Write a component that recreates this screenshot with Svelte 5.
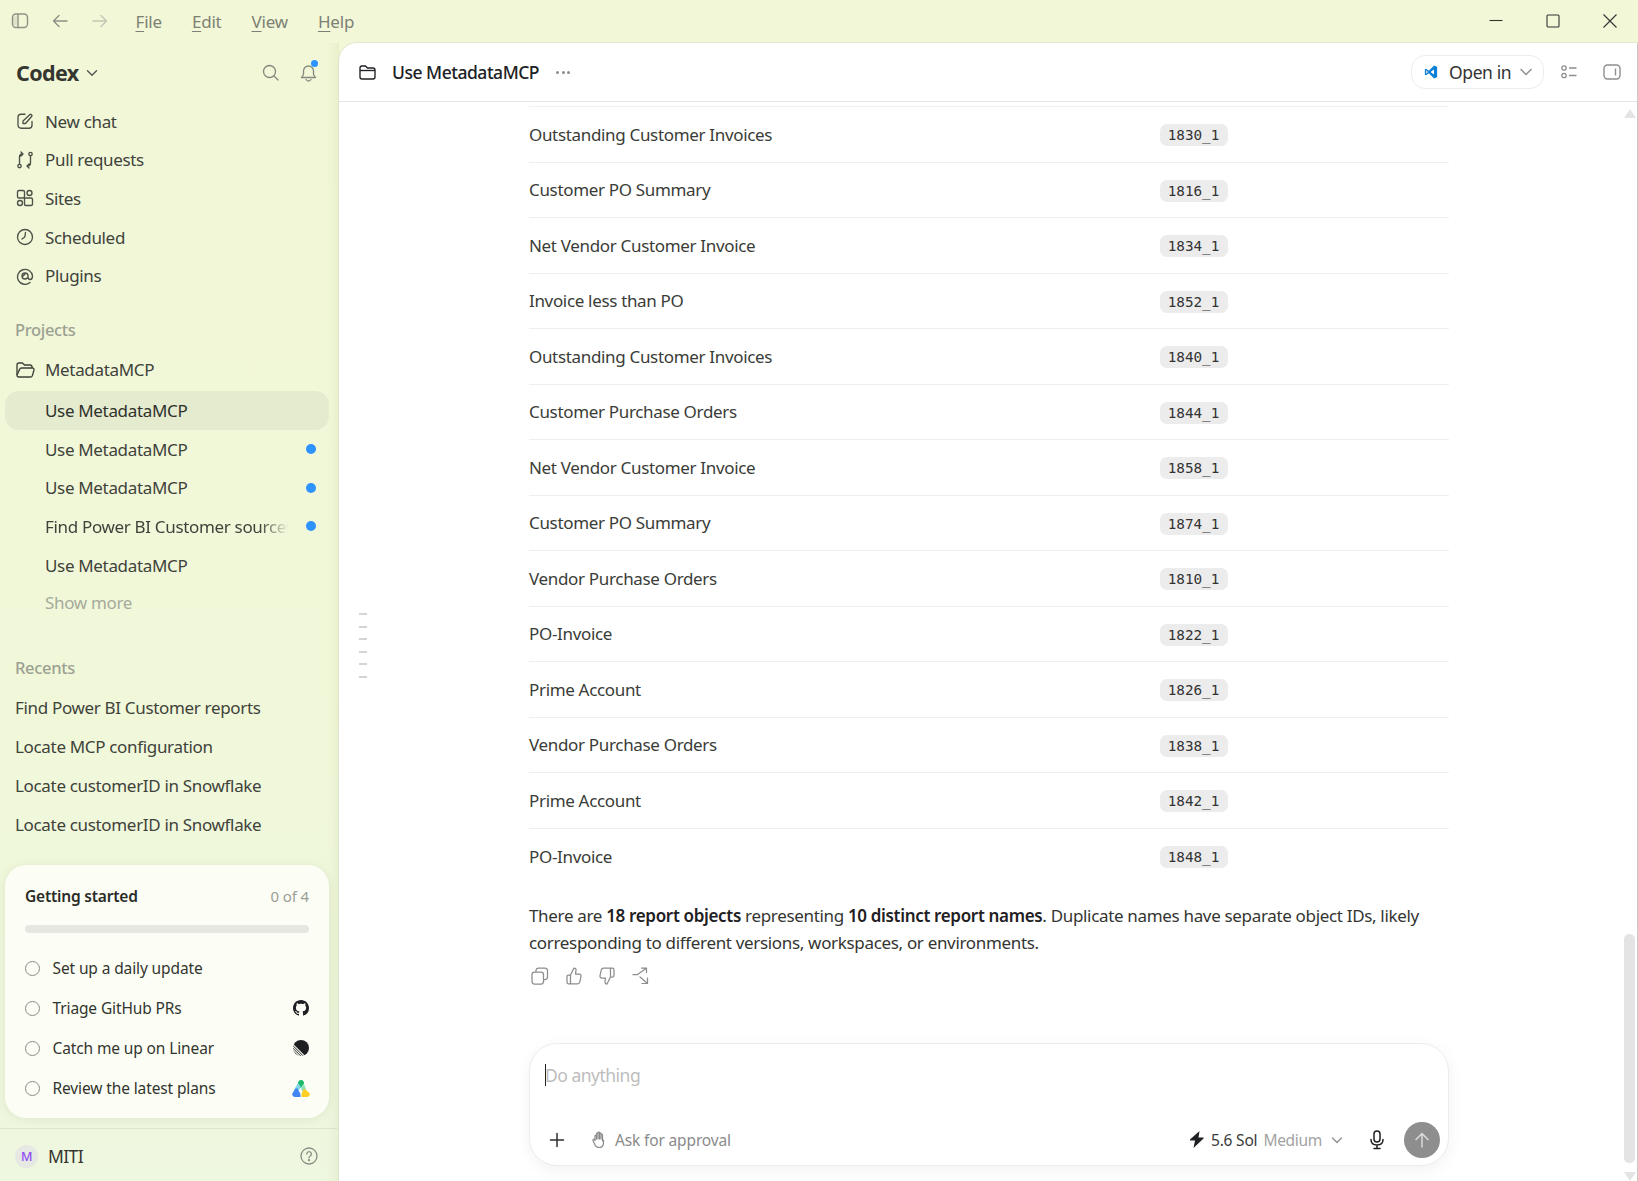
<script>
  const nav = [
    { label: 'New chat', icon: 'edit' },
    { label: 'Pull requests', icon: 'pr' },
    { label: 'Sites', icon: 'sites' },
    { label: 'Scheduled', icon: 'clock' },
    { label: 'Plugins', icon: 'at' }
  ];
  const threads = [
    { t: 'Use MetadataMCP', active: true },
    { t: 'Use MetadataMCP', dot: true },
    { t: 'Use MetadataMCP', dot: true },
    { t: 'Find Power BI Customer sources', dot: true, fade: true },
    { t: 'Use MetadataMCP' }
  ];
  const recents = ['Find Power BI Customer reports', 'Locate MCP configuration', 'Locate customerID in Snowflake', 'Locate customerID in Snowflake'];
  const rows = [
    ['Outstanding Customer Invoices', '1830_1'],
    ['Customer PO Summary', '1816_1'],
    ['Net Vendor Customer Invoice', '1834_1'],
    ['Invoice less than PO', '1852_1'],
    ['Outstanding Customer Invoices', '1840_1'],
    ['Customer Purchase Orders', '1844_1'],
    ['Net Vendor Customer Invoice', '1858_1'],
    ['Customer PO Summary', '1874_1'],
    ['Vendor Purchase Orders', '1810_1'],
    ['PO-Invoice', '1822_1'],
    ['Prime Account', '1826_1'],
    ['Vendor Purchase Orders', '1838_1'],
    ['Prime Account', '1842_1'],
    ['PO-Invoice', '1848_1']
  ];
  const tasks = [
    { t: 'Set up a daily update' },
    { t: 'Triage GitHub PRs', i: 'gh' },
    { t: 'Catch me up on Linear', i: 'linear' },
    { t: 'Review the latest plans', i: 'drive' }
  ];
  const menus = [['F', 'ile'], ['E', 'dit'], ['V', 'iew'], ['H', 'elp']];
</script>

<div class="app">
  <header class="titlebar">
    <div class="tb-left">
      <svg class="tb-ic" width="18" height="18" viewBox="0 0 18 18" fill="none" stroke="#8d9284" stroke-width="1.4"><rect x="1.5" y="2" width="15" height="13.5" rx="3.5"/><path d="M7 2v13.5"/><path d="M2 4.500h4.500v8.500H2z" fill="#8d9284" fill-opacity=".18" stroke="none"/></svg>
      <svg class="tb-back" width="18" height="18" viewBox="0 0 18 18" fill="none" stroke="#8d9284" stroke-width="1.4" stroke-linecap="round" stroke-linejoin="round"><path d="M16 9H2.500M8 3.500 2.500 9 8 14.500"/></svg>
      <svg class="tb-fwd" width="18" height="18" viewBox="0 0 18 18" fill="none" stroke="#c3c8b6" stroke-width="1.4" stroke-linecap="round" stroke-linejoin="round"><path d="M2 9h13.500M10 3.500 15.500 9 10 14.500"/></svg>
      <nav class="menu">
        {#each menus as m}
          <span class="menu-item"><u>{m[0]}</u>{m[1]}</span>
        {/each}
      </nav>
    </div>
    <div class="win">
      <svg width="14" height="14" viewBox="0 0 14 14" stroke="#333" stroke-width="1.1"><path d="M0.500 6.500h13"/></svg>
      <svg width="14" height="14" viewBox="0 0 14 14" fill="none" stroke="#333" stroke-width="1.1"><rect x="1" y="1" width="12" height="12" rx="1"/></svg>
      <svg width="14" height="14" viewBox="0 0 14 14" stroke="#333" stroke-width="1.1"><path d="m.5.500 13 13M13.500.500l-13 13"/></svg>
    </div>
  </header>

  <div class="body">
    <aside class="sidebar">
      <div class="brand">
        <span class="brand-name">Codex</span>
        <svg class="chev" width="12" height="12" viewBox="0 0 12 12" fill="none" stroke="#555" stroke-width="1.4" stroke-linecap="round" stroke-linejoin="round"><path d="M1.500 3.800 6 8.300l4.500-4.500"/></svg>
        <svg class="search" width="17" height="17" viewBox="0 0 17 17" fill="none" stroke="#86897e" stroke-width="1.3" stroke-linecap="round"><circle cx="7.500" cy="7.500" r="6"/><path d="m12 12 4 4"/></svg>
        <span class="bell">
          <svg width="17" height="18" viewBox="0 0 17 18" fill="none" stroke="#86897e" stroke-width="1.3" stroke-linecap="round" stroke-linejoin="round"><path d="M8.500 2a5 5 0 0 0-5 5v3.500L1.500 13.500h14l-2-3V7a5 5 0 0 0-5-5z"/><path d="M6 15.500c.6 1 1.500 1.500 2.500 1.500s1.900-.5 2.500-1.500"/></svg>
          <i class="bell-dot"></i>
        </span>
      </div>

      <ul class="nav">
        {#each nav as n}
          <li class="nav-item">
            <svg class="nav-ic" width="18" height="18" viewBox="0 0 18 18" fill="none" stroke="#4d5147" stroke-width="1.35" stroke-linecap="round" stroke-linejoin="round">
              {#if n.icon === 'edit'}
                <path d="M9 2.200H5a3 3 0 0 0-3 3v8a3 3 0 0 0 3 3h8a3 3 0 0 0 3-3V9.500"/><path d="M7 11.500V9l7-6.500c.8-.7 2.600.9 1.800 1.800L9.500 11.500z"/>
              {:else if n.icon === 'pr'}
                <circle cx="3.500" cy="15" r="1.700"/><circle cx="14.500" cy="3" r="1.700"/><path d="M3.500 13V6c0-2 1-3 3-3M5 5 7 3 5 1"/><path d="M14.500 5v7c0 2-1 3-3 3M13 13l-2 2 2 2"/>
              {:else if n.icon === 'sites'}
                <rect x="1.500" y="1.500" width="7" height="7.500" rx="1.500"/><circle cx="13.500" cy="4" r="2.500"/><circle cx="4" cy="14" r="2.500"/><path d="M8.500 9h6.500a1.500 1.500 0 0 1 1.500 1.500V15a1.500 1.500 0 0 1-1.500 1.500H10A1.500 1.500 0 0 1 8.500 15z"/>
              {:else if n.icon === 'clock'}
                <circle cx="9" cy="9" r="7.500"/><path d="M9.500 4.500 8.800 9 6 11"/>
              {:else}
                <path d="M16.500 9c0 2-1 3.500-2.500 3.500S12 11.500 12 9.500V9a3 3 0 1 0-3 3c1 0 1.700-.4 2.200-1M14 15.500A7.500 7.500 0 1 1 16.500 9"/><path d="M6.500 9.500 9 7"/>
              {/if}
            </svg>
            <span>{n.label}</span>
          </li>
        {/each}
      </ul>

      <div class="sec-label projects">Projects</div>
      <div class="project">
        <svg class="nav-ic" width="19" height="16" viewBox="0 0 19 16" fill="none" stroke="#3d4038" stroke-width="1.35" stroke-linejoin="round"><path d="M1 13V3a2 2 0 0 1 2-2h3.500l2 2H14a2 2 0 0 1 2 2v1"/><path d="M3 15h11.500c1 0 1.600-.5 1.900-1.400L18 8c.2-1-.4-2-1.500-2h-11c-1 0-1.600.5-1.900 1.400L1 13c0 1.200 1 2 2 2z"/></svg>
        <span>MetadataMCP</span>
      </div>
      <ul class="threads">
        {#each threads as t}
          <li class="thread" class:active={t.active}>
            <span class="thread-t" class:fade={t.fade}>{t.t}</span>
            {#if t.dot}<i class="dot"></i>{/if}
          </li>
        {/each}
      </ul>
      <div class="show-more">Show more</div>

      <div class="sec-label recents">Recents</div>
      <ul class="recent-list">
        {#each recents as r}<li>{r}</li>{/each}
      </ul>

      <section class="card">
        <div class="card-head"><strong>Getting started</strong><span>0 of 4</span></div>
        <div class="progress"></div>
        <ul class="tasks">
          {#each tasks as t}
            <li class="task">
              <i class="radio"></i>
              <span class="task-t">{t.t}</span>
              {#if t.i === 'gh'}
                <svg width="16" height="16" viewBox="0 0 16 16" fill="#1d1f22"><path d="M8 0C3.580 0 0 3.580 0 8c0 3.540 2.290 6.530 5.470 7.590.4.070.55-.17.55-.38 0-.19-.01-.82-.01-1.490-2.010.37-2.530-.49-2.690-.94-.09-.23-.48-.94-.82-1.130-.28-.15-.68-.52-.01-.53.63-.01 1.080.58 1.230.82.72 1.210 1.870.87 2.330.66.070-.52.28-.87.51-1.070-1.780-.2-3.640-.89-3.640-3.950 0-.87.31-1.590.82-2.150-.08-.2-.36-1.020.08-2.120 0 0 .67-.21 2.200.82.64-.18 1.320-.27 2-.27.68 0 1.360.09 2 .27 1.530-1.040 2.200-.82 2.200-.82.44 1.100.16 1.920.08 2.120.51.56.82 1.270.82 2.150 0 3.070-1.870 3.750-3.650 3.950.29.25.54.73.54 1.480 0 1.070-.01 1.930-.01 2.200 0 .21.15.46.55.38A8.013 8.013 0 0 0 16 8c0-4.420-3.580-8-8-8z"/></svg>
              {:else if t.i === 'linear'}
                <svg width="16" height="16" viewBox="0 0 16 16"><circle cx="8" cy="8" r="8" fill="#1d1f22"/><path d="M-2 2.500 13.500 18M-2 5 11 18M-2 7.500 8.500 18M-2 10 6 18" stroke="#fdfff5" stroke-width="1.100"/></svg>
              {:else if t.i === 'drive'}
                <svg class="drive" width="18" height="17" viewBox="0 0 18 17"><path d="M6 3.500Q6 0 9 0t3 3.500L9 8H6z" fill="#1bb96a"/><path d="M6 3 2 10h5l2-3z" fill="#7fd4e8"/><path d="M5 8.500H3.500L.6 13c-1 2 .4 4 2.400 4h5.500v-3l-3-5.500z" fill="#4285f4"/><path d="M12 4 9 9l3 4.500h3.500z" fill="#8be0b8"/><path d="m12 8.500 5.400 4.500c1 2-.4 4-2.400 4H9.500v-3z" fill="#ffcf24"/></svg>
              {/if}
            </li>
          {/each}
        </ul>
      </section>

      <footer class="profile">
        <span class="avatar">M</span>
        <span class="who">MITI</span>
        <svg class="help" width="18" height="18" viewBox="0 0 18 18" fill="none" stroke="#8a8d82" stroke-width="1.3" stroke-linecap="round"><circle cx="9" cy="9" r="8"/><path d="M6.800 7a2.300 2.300 0 1 1 3.500 2c-.8.500-1.300 1-1.300 1.800"/><circle cx="9" cy="13.200" r=".5" fill="#8a8d82"/></svg>
      </footer>
    </aside>

    <main class="panel">
      <div class="head">
        <svg width="17" height="15" viewBox="0 0 17 15" fill="none" stroke="#1f2023" stroke-width="1.35"><path d="M1 4.500V3a2 2 0 0 1 2-2h3.500l2 2H14a2 2 0 0 1 2 2v7a2 2 0 0 1-2 2H3a2 2 0 0 1-2-2z"/><path d="M1 5.500h15"/></svg>
        <h1>Use MetadataMCP</h1>
        <span class="more"><i></i><i></i><i></i></span>
        <div class="open-in">
          <svg class="vs" width="14" height="14" viewBox="0 0 24 24"><path fill="#0a7fd6" d="M17.500 1 8.200 10 3.500 6.400 1.500 7.400v9.200l2 1 4.700-3.600 9.300 9 5-2.400V3.400zM3.800 14.800V9.200L6.600 12zm13.400 1.500L11.200 12l6-4.300z"/></svg>
          <span>Open in</span>
          <svg width="14" height="14" viewBox="0 0 14 14" fill="none" stroke="#8f8f8f" stroke-width="1.500" stroke-linecap="round" stroke-linejoin="round"><path d="m2 4.500 5 5 5-5"/></svg>
        </div>
        <svg class="h-list" width="16" height="14" viewBox="0 0 16 14" fill="none" stroke="#8f8f8f" stroke-width="1.300"><circle cx="3" cy="3" r="2.200"/><circle cx="3" cy="10.500" r="2.200"/><path d="M8 3h7.500M8 10.500h7.500"/></svg>
        <svg class="h-panel" width="18" height="16" viewBox="0 0 18 16" fill="none" stroke="#8f8f8f" stroke-width="1.400"><rect x="1" y="1" width="16" height="14" rx="3.500"/><path d="M12.500 4.500v7"/></svg>
      </div>

      <div class="thread-area">
        <div class="content">
          <div class="tbl">
            {#each rows as r}
              <div class="row"><span class="name">{r[0]}</span><code>{r[1]}</code></div>
            {/each}
          </div>
          <p class="summary">There are <b>18 report objects</b> representing <b>10 distinct report names</b>. Duplicate names have separate object IDs, likely corresponding to different versions, workspaces, or environments.</p>
          <div class="actions">
            <svg width="18" height="18" viewBox="0 0 18 18" fill="none" stroke="#8d8d8d" stroke-width="1.250" stroke-linejoin="round"><rect x="1" y="5" width="11.500" height="12" rx="2.500"/><path d="M5 5V3.500A2.500 2.500 0 0 1 7.500 1H14a2.500 2.500 0 0 1 2.500 2.500V10a2.500 2.500 0 0 1-2.500 2.500h-1.500"/></svg>
            <svg width="16" height="18" viewBox="0 0 16 18" fill="none" stroke="#8d8d8d" stroke-width="1.250" stroke-linejoin="round"><path d="M4.500 8 8 1c1.500 0 2.200 1 2 2.500L9.500 7H13c1.500 0 2.300 1 2 2.300l-1.200 5.500c-.3 1.300-1 2-2.300 2h-7zM4.500 8H2.500A1.500 1.500 0 0 0 1 9.500v5.800a1.500 1.500 0 0 0 1.500 1.500h2"/></svg>
            <svg width="16" height="18" viewBox="0 0 16 18" fill="none" stroke="#8d8d8d" stroke-width="1.250" stroke-linejoin="round"><path d="M11.500 10 8 17c-1.500 0-2.200-1-2-2.500l.5-3.500H3c-1.500 0-2.300-1-2-2.300L2.200 3.200C2.500 1.900 3.200 1.200 4.500 1.200h7zM11.500 1.200h2A1.500 1.500 0 0 1 15 2.700v5.800A1.500 1.500 0 0 1 13.500 10h-2"/></svg>
            <svg width="17" height="17" viewBox="0 0 17 17" fill="none" stroke="#8d8d8d" stroke-width="1.250" stroke-linecap="round" stroke-linejoin="round"><path d="M1 7.500h4.500L14 1.500M9.500 1h5v4.500M8 10l7 6M15.500 11v5.500H10"/></svg>
          </div>
        </div>
      </div>

      <div class="dashes"><i></i><i></i><i></i><i></i><i></i><i></i></div>
      <div class="scroll">
        <svg class="arr up" width="12" height="9" viewBox="0 0 12 9"><path d="M6 0l6 9H0z" fill="#e4e4e4"/></svg>
        <div class="thumb"></div>
        <svg class="arr down" width="12" height="9" viewBox="0 0 12 9"><path d="M6 9 0 0h12z" fill="#e4e4e4"/></svg>
      </div>

      <div class="composer-wrap">
        <div class="composer">
          <div class="input"><i class="caret"></i><span>Do anything</span></div>
          <div class="tools">
            <svg class="plus" width="16" height="16" viewBox="0 0 16 16" stroke="#2f2f2f" stroke-width="1.500" stroke-linecap="round"><path d="M8 1.500v13M1.500 8h13"/></svg>
            <svg class="hand" width="16" height="17" viewBox="0 0 16 17" fill="none" stroke="#8a8a8a" stroke-width="1.200" stroke-linecap="round" stroke-linejoin="round"><path d="M3 9.500V5c0-1 1.500-1 1.500 0v3M4.500 8V2.800c0-1 1.500-1 1.500 0V8M6 8V1.800c0-1 1.500-1 1.500 0V8M7.500 8V2.500c0-1 1.500-1 1.500 0V8M9 8V4c0-1 1.500-1 1.500 0v6"/><path d="M3 9c-1-1.500-2.500-.8-2 .5l2 4.500c.8 1.800 2 2.500 4 2.500 3 0 4.500-2 4.500-5V9"/></svg>
            <span class="approval">Ask for approval</span>
            <svg class="bolt" width="16" height="17" viewBox="0 0 16 17" fill="#1f2023"><path d="M10.500 0 1 8.500c-.4.400 0 1 .5 1H6L4.500 17l10-9.500c.4-.4.100-1-.5-1h-4.500z"/></svg>
            <span class="model">5.6 Sol</span>
            <span class="effort">Medium</span>
            <svg class="m-chev" width="12" height="12" viewBox="0 0 12 12" fill="none" stroke="#8f8f8f" stroke-width="1.300" stroke-linecap="round" stroke-linejoin="round"><path d="m1.500 4 4.500 4.500L10.500 4"/></svg>
            <svg class="mic" width="14" height="20" viewBox="0 0 14 20" fill="none" stroke="#1f2023" stroke-width="1.500" stroke-linecap="round"><rect x="4" y="1" width="6" height="11" rx="3"/><path d="M1 9.500c0 3.500 2.500 5.500 6 5.500s6-2 6-5.500M7 15v3.500M4 18.500h6"/></svg>
            <span class="send"><svg width="16" height="16" viewBox="0 0 16 16" fill="none" stroke="#dcdcdc" stroke-width="1.500" stroke-linecap="round" stroke-linejoin="round"><path d="M8 15V1.500M2 7.500l6-6 6 6"/></svg></span>
          </div>
        </div>
      </div>
    </main>
  </div>
</div>

<style>
  :global(body) { margin: 0; background: #f1f7d8; }
  * { box-sizing: border-box; }
  ul { list-style: none; margin: 0; padding: 0; }
  i { display: block; font-style: normal; }
  .app {
    width: 1638px; height: 1181px; overflow: hidden;
    display: flex; flex-direction: column;
    font-family: "Noto Sans", "Open Sans", sans-serif;
    font-size: 17px; letter-spacing: -.33px; color: #3f423b;
    background: linear-gradient(180deg, #f1f7d7 0%, #f1f8d9 55%, #eef7df 100%);
  }
  .titlebar { height: 43px; flex: none; display: flex; align-items: center; justify-content: space-between; padding-bottom: 1px; }
  .tb-left { display: flex; align-items: center; padding-left: 11px; }
  .tb-back { margin-left: 22px; }
  .tb-fwd { margin-left: 22px; }
  .menu { display: flex; margin-left: 26.500px; gap: 30px; color: #7d8175; font-size: 17px; letter-spacing: -.2px; }
  .menu u { text-underline-offset: 3px; text-decoration-thickness: 1px; }
  .win { display: flex; align-items: center; gap: 43px; padding-right: 21px; }

  .body { flex: 1; display: flex; min-height: 0; }
  .sidebar { width: 339px; flex: none; display: flex; flex-direction: column; position: relative; box-shadow: inset -14px 0 14px -14px rgba(190,200,150,.35); }
  .brand { display: flex; align-items: center; height: 57px; padding-left: 16px; padding-top: 1px; }
  .brand-name { font-size: 21.500px; font-weight: 700; color: #34362f; letter-spacing: -.6px; }
  .chev { margin-left: 7px; margin-top: 2px; }
  .search { margin-left: auto; }
  .bell { position: relative; display: flex; margin: 1px 22px 0 21px; }
  .bell-dot { position: absolute; right: -1px; top: -4px; width: 7px; height: 7px; border-radius: 50%; background: #2d93ff; }

  .nav { margin-top: 2px; }
  .nav-item { height: 38.600px; display: flex; align-items: center; padding-left: 16px; }
  .nav-ic { flex: none; margin-right: 11px; }
  .nav-item span { white-space: nowrap; }

  .sec-label { color: #9ca192; font-size: 16.500px; font-weight: 500; padding-left: 15px; }
  .projects { margin-top: 24px; height: 32px; line-height: 22px; }
  .project { height: 38px; display: flex; align-items: center; padding-left: 16px; }
  .project .nav-ic { margin-right: 10px; }
  .threads { margin: 2px 10px 0 5px; }
  .thread { height: 38.700px; display: flex; align-items: center; padding: 0 13px 0 40px; border-radius: 14px; position: relative; }
  .thread.active { background: #e5ebcf; color: #2f312c; }
  .thread-t { white-space: nowrap; overflow: hidden; flex: 1; }
  .thread-t.fade { -webkit-mask-image: linear-gradient(90deg, #000 88%, transparent 100%); mask-image: linear-gradient(90deg, #000 88%, transparent 100%); flex: none; width: 244px; }
  .dot { width: 10px; height: 10px; border-radius: 50%; background: #2d93ff; margin-left: auto; flex: none; }
  .show-more { padding-left: 45px; color: #a5aa9b; height: 36px; line-height: 36px; margin-top: 1px; }
  .recents { margin-top: 35px; height: 32px; line-height: 24px; }
  .recent-list li { height: 39px; display: flex; align-items: center; padding-left: 15px; white-space: nowrap; }

  .card {
    margin: 21px 10px 0 5px; height: 253px; border-radius: 21px; background: #fcfef5;
    padding: 20px 20px 0; box-shadow: 0 1px 8px rgba(120,130,90,.14);
  }
  .card-head { display: flex; justify-content: space-between; align-items: center; height: 22px; margin-bottom: 18px; }
  .card-head strong { font-size: 15.500px; font-weight: 600; color: #2a2c28; letter-spacing: -.2px; }
  .card-head span { font-size: 15px; color: #9b9d96; letter-spacing: -.1px; }
  .progress { height: 8px; border-radius: 4px; background: #e6e7e1; margin-bottom: 15px; }
  .task { height: 40px; display: flex; align-items: center; }
  .radio { width: 15px; height: 15px; border: 1.300px solid #8b8d86; border-radius: 50%; margin-right: 12px; flex: none; }
  .task-t { font-size: 15.500px; color: #33352f; flex: 1; letter-spacing: -.12px; margin-left: .5px; }
  .drive { margin-right: -1px; }

  .profile { margin-top: 10px; border-top: 1px solid #dde3cc; flex: 1; display: flex; align-items: center; padding: 2px 20px 0 15px; margin-bottom: 0; }
  .avatar { width: 23px; height: 23px; border-radius: 50%; background: #e6e8e3; color: #8e4cf5; font-size: 12.500px; font-weight: 500; display: flex; align-items: center; justify-content: center; }
  .who { margin-left: 10px; font-size: 17.500px; color: #34362f; letter-spacing: -.6px; }
  .help { margin-left: auto; margin-right: 1px; }

  .panel { flex: 1; min-width: 0; background: #fff; border-top-left-radius: 18px; display: flex; flex-direction: column; position: relative; border-right: 1px solid #c8c8c4; box-shadow: -1px 0 0 #dfe5c8, 0 -1px 0 #e2e8cc; }
  .head { height: 59px; flex: none; display: flex; align-items: center; border-bottom: 1px solid #e4e4e4; padding: 0 16px 0 20px; }
  .head h1 { margin: 0 0 0 16px; font-size: 17.500px; font-weight: 500; color: #202124; letter-spacing: -.48px; }
  .more { display: flex; gap: 2.500px; margin-left: 17px; }
  .more i { width: 3px; height: 3px; border-radius: 50%; background: #8d8d8d; }
  .open-in { margin-left: auto; width: 133px; height: 34px; border: 1px solid #ececec; border-radius: 14px; display: flex; align-items: center; padding: 0 10px 0 12px; color: #333; }
  .open-in span { margin-left: 11px; margin-right: auto; font-size: 17.500px; letter-spacing: -.4px; }
  .h-list { margin-left: 17px; }
  .h-panel { margin-left: 26px; }

  .thread-area { flex: 1; min-height: 0; overflow: hidden; padding: 4px 188px 0 190px; }
  .content { width: 920px; }
  .tbl { border-top: 1px solid #f1f1f1; }
  .row { height: 55.500px; display: flex; align-items: center; border-bottom: 1px solid #efefef; color: #3a3c37; font-size: 17px; }
  .row:last-child { border-bottom: 0; }
  .name { width: 630.500px; flex: none; white-space: nowrap; }
  code { font-family: "DejaVu Sans Mono", "Liberation Mono", monospace; font-size: 14.300px; letter-spacing: 0; color: #333; background: #ececec; border-radius: 7px; width: 68px; height: 22px; margin-top: 2px; display: flex; align-items: center; justify-content: center; }
  .summary { margin: 17.500px 0 0; line-height: 27.200px; font-size: 17px; color: #343531; }
  .summary b { font-weight: 600; color: #1f2023; }
  .actions { display: flex; align-items: center; height: 20px; margin-top: 10px; padding-left: 2px; gap: 17px; }

  .dashes { position: absolute; left: 20px; top: 570px; display: flex; flex-direction: column; gap: 10.500px; }
  .dashes i { width: 8px; height: 2px; background: #d4d4d4; }
  .scroll { position: absolute; right: 1px; top: 59px; bottom: 0; width: 12px; }
  .arr { position: absolute; left: 0; }
  .arr.up { top: 7px; }
  .arr.down { bottom: 0; }
  .thumb { position: absolute; left: 0; width: 11px; top: 832px; height: 229px; background: #e4e4e4; border-radius: 5px; }

  .composer-wrap { flex: none; padding: 0 188px 15px 190px; }
  .composer { height: 123px; width: 920px; border: 1px solid #ececec; border-radius: 28px; background: #fff; box-shadow: 0 4px 16px rgba(0,0,0,.055); display: flex; flex-direction: column; position: relative; z-index: 1; }
  .input { display: flex; align-items: center; height: 62px; padding: 0 0 0 15px; color: #bdbdbd; font-size: 17.500px; letter-spacing: -.5px; flex: none; }
  .caret { width: 1px; height: 22px; background: #222; margin-right: -1px; }
  .tools { flex: none; height: 55px; margin-top: 6px; display: flex; align-items: center; padding: 0 8px 0 19px; }
  .hand { margin-left: 27px; }
  .approval { margin-left: 7px; color: #8a8a8a; font-size: 15.500px; letter-spacing: -.15px; }
  .bolt { margin-left: auto; }
  .model { margin-left: 6px; color: #3a3a3a; font-size: 15.500px; letter-spacing: -.2px; }
  .effort { margin-left: 6px; color: #a2a2a2; font-size: 15.500px; letter-spacing: -.3px; }
  .m-chev { margin-left: 9px; }
  .mic { margin-left: 27px; }
  .send { width: 36px; height: 36px; border-radius: 50%; background: #8e8e8e; display: flex; align-items: center; justify-content: center; margin-left: 20px; }
</style>
